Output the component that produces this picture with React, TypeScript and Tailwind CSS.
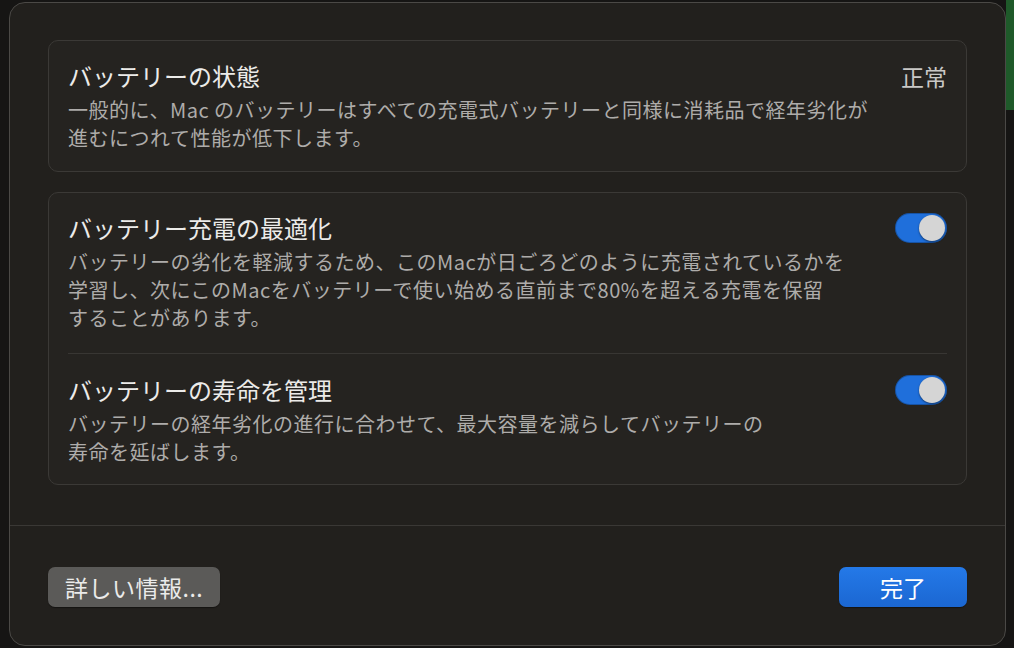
const font = { fontFamily: '"Noto Sans CJK JP", "Noto Sans", sans-serif' };

function Toggle() {
  return (
    <div className="flex h-[30px] w-[52px] shrink-0 items-center justify-end rounded-full bg-[#1f6fdb] px-[2px] shadow-[inset_0_0_0_1px_rgba(0,0,0,0.25)]">
      <div className="h-[26px] w-[26px] rounded-full bg-[#d5d5d5] shadow-[0_1px_2px_rgba(0,0,0,0.5)]" />
    </div>
  );
}

function Row({
  title,
  lines,
  right,
}: {
  title: string;
  lines: string[];
  right: React.ReactNode;
}) {
  return (
    <div className="flex items-start justify-between">
      <div className="flex flex-col gap-[4px]">
        <div className="text-[24px] leading-[32px] font-normal text-[#ecebe9]">{title}</div>
        <div className="text-[20px] leading-[28px] tracking-[0.5px] text-[#aeacaa]">
          {lines.map((l) => (
            <div key={l}>{l}</div>
          ))}
        </div>
      </div>
      <div className="flex h-[32px] items-center">{right}</div>
    </div>
  );
}

export default function App() {
  return (
    <div className="flex h-[648px] w-[1014px] overflow-hidden bg-[#161514]" style={font}>
      <div className="w-[9px] shrink-0" />
      <div className="mt-[2px] flex h-[644px] w-[997px] shrink-0 flex-col rounded-[16px] border border-[#4b4946] bg-[#22201d]">
        <div className="flex flex-col gap-[20px] px-[38px] pt-[37px] pb-[40px]">
          <div className="rounded-[10px] border border-[#3b3936] bg-[#252320] px-[19px] pt-[19px] pb-[19px]">
            <Row
              title="バッテリーの状態"
              lines={[
                "一般的に、Mac のバッテリーはすべての充電式バッテリーと同様に消耗品で経年劣化が",
                "進むにつれて性能が低下します。",
              ]}
              right={<span className="text-[23px] text-[#c9c8c6]">正常</span>}
            />
          </div>
          <div className="rounded-[10px] border border-[#3b3936] bg-[#252320] px-[19px] pt-[19px] pb-[18px]">
            <Row
              title="バッテリー充電の最適化"
              lines={[
                "バッテリーの劣化を軽減するため、このMacが日ごろどのように充電されているかを",
                "学習し、次にこのMacをバッテリーで使い始める直前まで80%を超える充電を保留",
                "することがあります。",
              ]}
              right={<Toggle />}
            />
            <div className="mt-[21px] mb-[20px] h-px bg-[#383633]" />
            <Row
              title="バッテリーの寿命を管理"
              lines={[
                "バッテリーの経年劣化の進行に合わせて、最大容量を減らしてバッテリーの",
                "寿命を延ばします。",
              ]}
              right={<Toggle />}
            />
          </div>
        </div>
        <div className="h-px bg-[#3a3835]" />
        <div className="flex items-center justify-between px-[38px] pt-[41px]">
          <button className="h-[40px] rounded-[7px] bg-[#5b5a58] px-[17px] text-[23px] tracking-[0.5px] text-[#ebebea] shadow-[0_1px_1px_rgba(0,0,0,0.4)]">
            詳しい情報...
          </button>
          <button className="h-[40px] w-[128px] rounded-[7px] bg-gradient-to-b from-[#2479e8] to-[#1b67d2] text-[23px] text-white shadow-[0_1px_1px_rgba(0,0,0,0.4)]">
            完了
          </button>
        </div>
      </div>
      <div className="flex flex-1 flex-col">
        <div className="h-[110px] bg-[#1f5a2a]" />
      </div>
    </div>
  );
}
